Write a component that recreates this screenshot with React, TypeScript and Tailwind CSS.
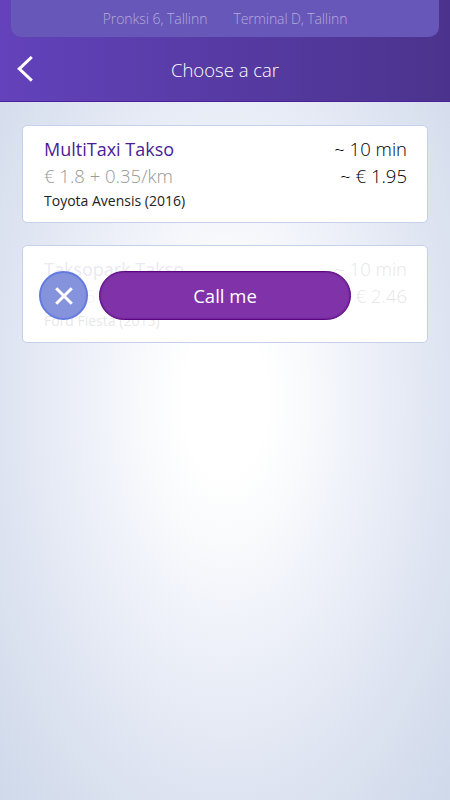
import clsx from "clsx";

type Car = {
  company: string;
  price: string;
  model: string;
  eta: string;
  total: string;
};

const cars: Car[] = [
  {
    company: "MultiTaxi Takso",
    price: "€ 1.8 + 0.35/km",
    model: "Toyota Avensis (2016)",
    eta: "~ 10 min",
    total: "~ € 1.95",
  },
  {
    company: "Taksopark Takso",
    price: "€ 2.25 + 0.45/km",
    model: "Ford Fiesta (2015)",
    eta: "~ 10 min",
    total: "~ € 2.46",
  },
];

const Header = () => (
  <header className="h-[102px] border-b border-[#4a2297] bg-linear-to-r from-[#6342bb] to-[#4b338d]">
    <div className="mx-[11px] flex h-[37px] justify-center gap-[26px] rounded-b-[10px] bg-[#6757b8] pt-[9px] text-[14px] leading-5 font-light text-[#b5aadd]">
      <span className="tracking-[-0.05px]">Pronksi 6, Tallinn</span>
      <span className="tracking-[-0.1px]">Terminal D, Tallinn</span>
    </div>
    <div className="grid h-16 grid-cols-[60px_1fr_60px] items-center text-white">
      <button className="pl-[17px]" aria-label="Back">
        <svg width="17" height="26" viewBox="0 0 17 26" fill="none">
          <path d="M14.8 1L2.3 12.8L14.8 24.6" stroke="currentColor" strokeWidth="3" />
        </svg>
      </button>
      <h1 className="pt-0.5 text-center text-[18.5px] font-light">
        Choose a car
      </h1>
    </div>
  </header>
);

const CallActions = () => (
  <div className="absolute top-[25px] left-4 flex gap-[11px]">
    <button
      className="flex size-[49px] items-center justify-center rounded-full border-2 border-[#637be0] bg-[#8592dc] text-white"
      aria-label="Cancel"
    >
      <svg width="18" height="18" viewBox="0 0 18 18" fill="none">
        <path d="M1.2 1.2L16.8 16.8M16.8 1.2L1.2 16.8" stroke="currentColor" strokeWidth="3" />
      </svg>
    </button>
    <button className="h-[49px] w-[252px] rounded-full border border-[#5a0680] bg-[#8033a8] text-[18.5px] text-white shadow-[inset_0_0_2px_#5a0680]">
      Call me
    </button>
  </div>
);

const CarCard = ({ car, selected }: { car: Car; selected?: boolean }) => (
  <div className="relative h-[98px] rounded-[5px] border border-[#c5d0ea] bg-white pt-[9px] pr-5 pl-[21px]">
    <div className={clsx("flex justify-between", selected && "opacity-10")}>
      <div>
        <p className="pt-px text-[18px] leading-[26px] text-[#4a1c98]">
          {car.company}
        </p>
        <p className="text-[18.5px] leading-[27px] font-light text-[#999]">
          {car.price}
        </p>
        <p className="text-[14px] leading-6 text-[#222]">{car.model}</p>
      </div>
      <div className="text-right text-[18.5px] leading-[27px] font-light text-black">
        <p>{car.eta}</p>
        <p>{car.total}</p>
      </div>
    </div>
    {selected && <CallActions />}
  </div>
);

const App = () => {
  return (
    <div className="flex h-[800px] w-[450px] flex-col bg-[radial-gradient(ellipse_at_50%_50%,#fff_0%,#fff_13%,#f9fafc_26%,#f0f3fa_39%,#dee4f1_70%,#cfd9ea_100%)] font-['Open_Sans',sans-serif]">
      <Header />
      <main className="flex flex-col gap-[22px] px-[22px] pt-[23px]">
        {cars.map((car, index) => (
          <CarCard key={car.company} car={car} selected={index === 1} />
        ))}
      </main>
    </div>
  );
};

export default App;
